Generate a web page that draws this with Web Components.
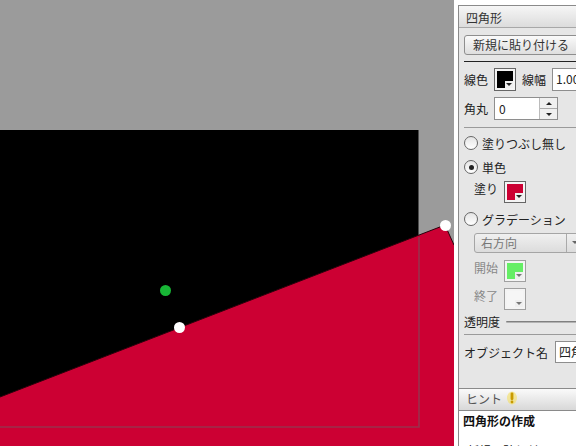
<!DOCTYPE html>
<html><head><meta charset="utf-8">
<style>
html,body{margin:0;padding:0;width:576px;height:446px;overflow:hidden;background:#fff}
body{font:12px/16px "Noto Sans CJK JP","Noto Sans",sans-serif;color:#222}
</style></head><body>
<app-shell>
  <shape-canvas slot="canvas"></shape-canvas>
  <side-panel slot="panel">
    <panel-title slot="top">四角形</panel-title>
    <shape-props></shape-props>
    <hint-box slot="bottom"></hint-box>
  </side-panel>
</app-shell>
<script>
function def(name,html){
  customElements.define(name,class extends HTMLElement{
    constructor(){super();this.attachShadow({mode:"open"}).innerHTML=html;}
  });
}
def("app-shell",`<style>:host{display:flex;width:576px;height:446px;overflow:hidden;background:#fff}
::slotted([slot=canvas]){flex:0 0 454px}
::slotted([slot=panel]){flex:0 0 auto;margin-left:4px}</style>
<slot name="canvas"></slot><slot name="panel"></slot>`);

def("shape-canvas",`<style>:host{display:block;height:446px;background:#9b9b9b;overflow:hidden}svg{display:block}</style>
<svg width="454" height="446" viewBox="0 0 454 446">
<rect x="-10" y="130" width="428.5" height="298" fill="#000"/>
<polygon points="0,397 445,225 454,245 454,446 0,446" fill="#cc0033"/>
<polyline points="0,397 445,225 454,245" fill="none" stroke="#2a000b" stroke-width="1"/>
<path d="M0 427H419V237" fill="none" stroke="#99304c" stroke-width="1.6"/>
<circle cx="165.5" cy="290.5" r="5.5" fill="#18b636"/>
<circle cx="179.5" cy="327.5" r="5.5" fill="#fff"/>
<circle cx="445.5" cy="225.5" r="5.5" fill="#fff"/>
</svg>`);

def("side-panel",`<style>:host{display:flex;flex-direction:column;width:200px;height:446px;box-sizing:border-box;padding-top:5px;background:#fff}
.wrap{flex:1;min-height:0;display:flex;flex-direction:column;border:1px solid #8a8a8a;border-right:0;border-bottom:0;background:#e6e6e6}
.grow{flex:0 0 360px}</style>
<div class="wrap"><slot name="top"></slot><div class="grow"><slot></slot></div><slot name="bottom"></slot></div>`);

def("panel-title",`<style>:host{display:block;height:22px;box-sizing:border-box;padding:3px 0 0 7px;font-size:12px;line-height:17px;color:#333;
background:linear-gradient(#f6f6f6,#dcdcdc);border-bottom:1px solid #a8a8a8}</style><slot></slot>`);

def("ui-button",`<style>:host{display:block;width:150px;height:20px;box-sizing:border-box;border:1px solid #8e8e8e;border-radius:3px;
background:linear-gradient(#fafafa,#dedede);text-align:center;padding-right:36px;line-height:18px;color:#333;font-size:12px;white-space:nowrap}</style><slot></slot>`);

def("ui-swatch",`<style>:host{display:inline-block;box-sizing:border-box;width:22px;height:22px;border:1px solid #666;padding:2px;background:#f4f4f4;flex:none}
.c{position:relative;width:16px;height:100%;background:var(--c,#000)}
.n{position:absolute;right:0;bottom:0;width:8px;height:7px;background:#efefef}
.n::after{content:"";position:absolute;left:1px;top:2px;border:3px solid transparent;border-top:3px solid #222;border-bottom:0}
:host([off]){border-color:#a0a0a0}:host([off]) .n::after{border-top-color:#777}</style>
<div class="c"><div class="n"></div></div>`);

def("ui-radio",`<style>:host{display:flex;align-items:center;gap:4px;height:16px;color:#222}
i{box-sizing:border-box;width:14px;height:14px;border:1px solid #666;border-radius:50%;background:linear-gradient(#e4e4e4,#fff);display:flex;align-items:center;justify-content:center;flex:none}
b{width:5px;height:5px;border-radius:50%;background:#222;display:none}
span{padding-top:1px}
:host([on]) b{display:block}</style><i><b></b></i><span><slot></slot></span>`);

def("ui-spin",`<style>:host{display:flex;box-sizing:border-box;width:64px;height:23px;border:1px solid #8e8e8e;background:#fff;font-size:12px;line-height:21px;padding-left:4px;justify-content:space-between}
.s{width:17px;border-left:1px solid #bbb;display:flex;flex-direction:column;background:#f0f0f0}
.s div{flex:1;display:flex;align-items:center;justify-content:center}
.s div+div{border-top:1px solid #aaa}
.u{border:3px solid transparent;border-bottom:3px solid #222;border-top:0}
.d{border:3px solid transparent;border-top:3px solid #222;border-bottom:0}</style>
<span><slot></slot></span><div class="s"><div><i class="u"></i></div><div><i class="d"></i></div></div>`);

def("shape-props",`<style>:host{display:block;padding:7px 0 0 5px;font-size:12px;height:100%;box-sizing:border-box}
.rule{height:1px;background:#222}
.row{display:flex;align-items:center;gap:6px}
.top{align-items:flex-start}
.field{box-sizing:border-box;border:1px solid #8e8e8e;background:#fff;line-height:20px;padding-left:3px;color:#222;white-space:nowrap}
.sel{box-sizing:border-box;width:112px;height:20px;border:1px solid #a5a5a5;border-radius:3px;background:linear-gradient(#f0f0f0,#dcdcdc);color:#777;display:flex;justify-content:space-between;line-height:18px;padding-left:6px;margin-left:10px}
.sel .ar{width:18px;border-left:1px solid #aaa;position:relative}
.sel .ar::after{content:"";position:absolute;left:5px;top:7px;border:3px solid transparent;border-top:3px solid #666;border-bottom:0}
.off{color:#888}
.slider{flex:none;width:100px;height:2px;border-radius:2px;background:linear-gradient(#666,#ccc)}
.hr{height:1px;background:#9a9a9a}
.dn{padding-top:1px}
</style>
<ui-button>新規に貼り付ける</ui-button>
<div class="rule" style="margin-top:6px"></div>
<div class="row" style="margin-top:6px;height:23px"><span>線色</span><ui-swatch style="height:23px"></ui-swatch><span>線幅</span><div class="field" style="width:60px;height:23px">1.00</div></div>
<div class="row" style="margin-top:6px;height:23px"><span>角丸</span><ui-spin>0</ui-spin></div>
<div class="hr" style="margin-top:7px"></div>
<ui-radio style="margin-top:7px">塗りつぶし無し</ui-radio>
<ui-radio on style="margin-top:8px">単色</ui-radio>
<div class="row top" style="margin:6px 0 0 10px;height:22px"><span>塗り</span><ui-swatch style="--c:#cc0033"></ui-swatch></div>
<ui-radio style="margin-top:8px">グラデーション</ui-radio>
<div class="sel" style="margin-top:6px"><span>右方向</span><span class="ar"></span></div>
<div class="row off top" style="margin:7px 0 0 10px;height:22px"><span>開始</span><ui-swatch off style="--c:#66ee66"></ui-swatch></div>
<div class="row off top" style="margin:6px 0 0 10px;height:22px"><span>終了</span><ui-swatch off style="--c:#f6f6f6"></ui-swatch></div>
<div class="row" style="margin-top:3px;height:18px"><span>透明度</span><div class="slider"></div></div>
<div class="hr" style="margin-top:3px"></div>
<div class="row" style="margin-top:6px;height:22px;gap:7px"><span class="dn">オブジェクト名</span><div class="field" style="width:80px;height:22px">四角形</div></div>`);

def("hint-box",`<style>:host{display:block;flex:1;min-height:0;background:#fff;font-size:12px;color:#111;overflow:hidden}
.h{height:23px;box-sizing:border-box;border-top:1px solid #8a8a8a;border-bottom:1px solid #8a8a8a;background:linear-gradient(#fafafa,#d8d8d8);padding:2px 0 0 7px;color:#555;font-size:12px;display:flex;gap:5px}
.b{padding:1px 0 0 4px;font-weight:700;font-size:12px;line-height:18px}
.t{margin:13px 0 0 4px;line-height:16px;white-space:nowrap}</style>
<div class="h"><span>ヒント</span><svg width="10" height="15" viewBox="0 0 10 15"><ellipse cx="5" cy="7" rx="5" ry="6.5" fill="#f5e060" opacity=".6"/><rect x="3.6" y="1.5" width="2.8" height="7.5" rx="1.2" fill="#c89a00"/><circle cx="5" cy="11" r="1.4" fill="#c89a00"/></svg></div>
<div class="b">四角形の作成</div><div class="t">[新規に貼り付ける]</div>`);
</script>
</body></html>
